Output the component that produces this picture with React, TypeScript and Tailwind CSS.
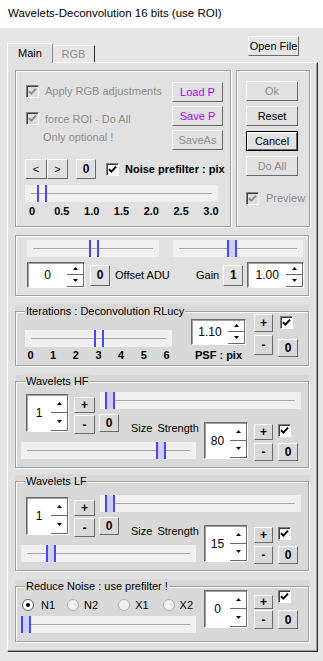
import React from 'react';

const PANEL = 'border border-[#a0a0a0] shadow-[inset_1px_1px_0_#fff,1px_1px_0_#fff]';
const GRAY = 'text-[#8d8d8d]';

interface BtnProps {
  className?: string;
  children?: React.ReactNode;
  disabled?: boolean;
  bold?: boolean;
  tone?: 'black' | 'purple';
  frame?: boolean;
}

const Btn: React.FC<BtnProps> = ({ className = '', children, disabled, bold, tone = 'black', frame }) => {
  const color = disabled ? GRAY : tone === 'purple' ? 'text-[#b300ff]' : 'text-black';
  const edge = frame
    ? 'border border-black shadow-[inset_1px_1px_0_#fff,inset_-1px_-1px_0_#6a6a6a]'
    : 'border border-t-white border-l-white border-r-[#6a6a6a] border-b-[#6a6a6a]';
  return (
    <div className={`flex shrink-0 items-center justify-center leading-none ${edge} ${color} ${bold ? 'font-bold text-[12px]' : 'text-[11px]'} ${className}`}>
      {children}
    </div>
  );
};

const Check: React.FC<{ disabled?: boolean; className?: string }> = ({ disabled, className = '' }) => (
  <div className={`flex h-[13px] w-[13px] shrink-0 items-center justify-center border border-t-[#808080] border-l-[#808080] border-r-white border-b-white shadow-[inset_1px_1px_0_#404040] ${disabled ? 'bg-[#dedede]' : 'bg-white'} ${className}`}>
    <svg width="9" height="9" viewBox="0 0 9 9">
      <path d="M1 4.2 L3.4 6.6 L8 1.6" fill="none" stroke={disabled ? '#8d8d8d' : '#000'} strokeWidth="2" />
    </svg>
  </div>
);

const Radio: React.FC<{ on?: boolean; className?: string }> = ({ on, className = '' }) => (
  <div className={`flex h-[12px] w-[12px] shrink-0 items-center justify-center rounded-full border ${on ? 'border-[#606060] bg-white' : 'border-[#b4b4b4] bg-[#f0f0f0]'} ${className}`}>
    {on && <div className="h-[4px] w-[4px] rounded-full bg-black" />}
  </div>
);

// thumb offset is a value, so it goes inline
const Slider: React.FC<{ className?: string; at: number; fill?: boolean }> = ({ className = '', at, fill }) => (
  <div className={`relative flex shrink-0 items-center bg-[#f0f0f0] px-[6px] ${className}`}>
    <div className="h-px w-full bg-[#a8a8a8]" />
    <div
      className={`absolute top-0 bottom-0 w-[10px] border-x-2 border-[#4646ff] ${fill ? 'bg-[#cfcff8]' : ''}`}
      style={{ left: at }}
    />
  </div>
);

const Arrow: React.FC<{ up?: boolean }> = ({ up }) => (
  <svg width="5" height="3" viewBox="0 0 5 3">
    <path d={up ? 'M0 3 L2.5 0 L5 3 Z' : 'M0 0 L2.5 3 L5 0 Z'} fill="#000" />
  </svg>
);

const Spin: React.FC<{ value: string; className?: string }> = ({ value, className = '' }) => (
  <div className={`flex shrink-0 border border-t-[#6a6a6a] border-l-[#6a6a6a] border-r-white border-b-white bg-white shadow-[inset_1px_1px_0_#a0a0a0] ${className}`}>
    <div className="flex flex-1 items-center justify-center text-[12px] text-black">{value}</div>
    <div className="flex w-[17px] flex-col">
      <div className="flex flex-1 items-center justify-center border-r border-b border-[#6a6a6a]">
        <Arrow up />
      </div>
      <div className="flex flex-1 items-center justify-center border-r border-b border-[#6a6a6a]">
        <Arrow />
      </div>
    </div>
  </div>
);

const Group: React.FC<{ label: string; className?: string; children: React.ReactNode }> = ({ label, className = '', children }) => (
  <div className={`w-[294px] bg-[#d9d9d9] pt-[6px] ${className}`}>
    <div className="relative border border-[#a0a0a0] shadow-[inset_1px_1px_0_#fff,1px_1px_0_#fff]">
      <span className="absolute left-[9px] top-[-8px] bg-[#d9d9d9] px-[1px] text-[11px] leading-[14px] text-black">{label}</span>
      {children}
    </div>
  </div>
);

const PlusMinus: React.FC<{ top: string; bottom: string; className?: string }> = ({ top, bottom, className = '' }) => (
  <div className={`flex flex-col ${className}`}>
    <Btn bold className={top}>+</Btn>
    <Btn bold className={bottom}>-</Btn>
  </div>
);

const Wavelets: React.FC<{ label: string; size: string; strength: string; low: number; className?: string; pad?: string }> = ({
  label,
  size,
  strength,
  low,
  className = '',
  pad = '',
}) => (
  <Group label={label} className={className}>
    <div className={`grid grid-cols-[82px_104px_1fr] grid-rows-[30px_28px_27px] ${pad}`}>
      <div className="col-start-1 row-span-2 row-start-1 flex items-start">
        <Spin value={size} className="ml-[10px] mt-[12px] h-[38px] w-[43px]" />
        <PlusMinus className="ml-[5px] mt-[15px] gap-[2px]" top="h-[16px] w-[21px]" bottom="h-[19px] w-[21px]" />
      </div>
      <Slider className="col-span-2 col-start-2 row-start-1 ml-[2px] mt-[10px] h-[17px] w-[201px]" at={5} fill />
      <div className="col-start-2 row-start-2 flex items-start">
        <Btn bold className="ml-[1px] mt-[2px] h-[18px] w-[20px]">0</Btn>
        <span className="ml-[12px] mt-[10px] leading-[13px] text-black">Size</span>
        <span className="ml-[5px] mt-[10px] leading-[13px] text-black">Strength</span>
      </div>
      <div className="col-start-3 row-span-2 row-start-2 flex items-start">
        <Spin value={strength} className="ml-[2px] mt-[10px] h-[37px] w-[44px]" />
        <PlusMinus className="ml-[6px] mt-[12px] gap-[3px]" top="h-[16px] w-[19px]" bottom="h-[18px] w-[19px]" />
        <div className="ml-[5px] mt-[12px] flex flex-col">
          <Check />
          <Btn bold className="mt-[6px] h-[18px] w-[20px]">0</Btn>
        </div>
      </div>
      <Slider className="col-span-2 col-start-1 row-start-3 ml-[5px] mt-[2px] h-[17px] w-[175px]" at={low} fill />
    </div>
  </Group>
);

export default function App() {
  return (
    <div className="h-[661px] w-[323px] overflow-hidden bg-[#e6e6e6] font-['Liberation_Sans',Arial,sans-serif] text-[11px] text-black">
      <div className="flex h-[28px] items-center bg-white pl-[8px] text-[11.5px]">Wavelets-Deconvolution 16 bits (use ROI)</div>

      <div className="flex h-[34px] pl-[7px]">
        <div className="flex items-end">
          <div className="relative z-10 -mb-px flex h-[20px] w-[46px] items-center justify-center border-t border-l border-r border-t-white border-l-white border-r-[#8a8a8a] bg-[#e1e1e1]">
            Main
          </div>
          <div className={`flex h-[17px] w-[42px] items-center justify-center border-t border-r border-t-white border-r-[#303030] ${GRAY}`}>RGB</div>
        </div>
        <Btn className="ml-auto mr-[24px] mt-[8px] h-[20px] w-[51px]">Open File</Btn>
      </div>

      <div className="ml-[7px] h-[590px] w-[311px] border border-t-white border-l-white border-r-[#303030] border-b-[#303030] bg-[#e1e1e1] pl-[7px] pt-[7px] shadow-[inset_-1px_-1px_0_#a0a0a0]">
        <div className="flex gap-[5px]">
          <div className={`flex h-[157px] w-[216px] flex-col ${PANEL}`}>
            <div className="flex h-[88px]">
              <div className="flex flex-col pl-[10px] pt-[12px]">
                <div className="flex items-center gap-[6px]">
                  <Check disabled />
                  <span className={GRAY}>Apply RGB adjustments</span>
                </div>
                <div className="mt-[11px] flex items-center gap-[6px]">
                  <Check disabled />
                  <span className={GRAY}>force ROI - Do All</span>
                </div>
                <span className={`mt-[4px] pl-[17px] leading-[13px] ${GRAY}`}>Only optional !</span>
              </div>
              <div className="ml-auto mr-[7px] flex flex-col gap-[4px] pt-[11px]">
                <Btn tone="purple" className="h-[20px] w-[51px]">Load P</Btn>
                <Btn tone="purple" className="h-[20px] w-[51px]">Save P</Btn>
                <Btn disabled className="h-[20px] w-[51px]">SaveAs</Btn>
              </div>
            </div>
            <div className="flex h-[20px] items-center pl-[9px]">
              <Btn className="h-[20px] w-[22px]">&lt;</Btn>
              <Btn className="h-[20px] w-[21px]">&gt;</Btn>
              <Btn bold className="ml-[8px] h-[20px] w-[20px]">0</Btn>
              <Check className="ml-[10px]" />
              <span className="ml-[6px] font-bold">Noise prefilter : pix</span>
            </div>
            <Slider className="ml-[9px] mt-[6px] h-[17px] w-[193px]" at={12} />
            <div className="ml-[9px] mt-[3px] flex w-[193px] justify-between font-bold leading-[13px]">
              {['0', '0.5', '1.0', '1.5', '2.0', '2.5', '3.0'].map((t) => (
                <span key={t} className="flex w-[14px] justify-center">{t}</span>
              ))}
            </div>
          </div>

          <div className={`flex h-[157px] w-[74px] flex-col gap-[5px] pl-[9px] pt-[10px] ${PANEL}`}>
            <Btn disabled className="h-[20px] w-[52px]">Ok</Btn>
            <Btn className="h-[20px] w-[52px]">Reset</Btn>
            <Btn frame className="h-[20px] w-[52px]">Cancel</Btn>
            <Btn disabled className="h-[20px] w-[52px]">Do All</Btn>
            <div className="mt-[9px] flex items-center gap-[7px]">
              <Check disabled />
              <span className={GRAY}>Preview</span>
            </div>
          </div>
        </div>

        <div className={`mt-[8px] flex h-[61px] w-[294px] flex-col pl-[11px] pt-[4px] ${PANEL}`}>
          <div className="flex">
            <Slider className="h-[17px] w-[132px]" at={62} />
            <Slider className="ml-[14px] h-[17px] w-[130px]" at={54} fill />
          </div>
          <div className="mt-[5px] flex items-center">
            <Spin value="0" className="h-[26px] w-[58px]" />
            <Btn bold className="ml-[5px] h-[21px] w-[20px]">0</Btn>
            <span className="ml-[5px] w-[81px]">Offset ADU</span>
            <span>Gain</span>
            <Btn bold className="ml-[4px] h-[21px] w-[20px]">1</Btn>
            <Spin value="1.00" className="ml-[4px] h-[26px] w-[57px]" />
          </div>
        </div>

        <Group label="Iterations : Deconvolution RLucy" className="mt-[9px]">
          <div className="flex h-[53px] items-start">
            <div className="ml-[9px] mt-[18px] flex flex-col">
              <Slider className="h-[17px] w-[147px]" at={69} />
              <div className="mt-[2px] flex w-[147px] justify-between font-bold leading-[13px]">
                {['0', '1', '2', '3', '4', '5', '6'].map((t) => (
                  <span key={t} className="flex w-[11px] justify-center">{t}</span>
                ))}
              </div>
            </div>
            <div className="ml-[19px] mt-[7px] flex flex-col items-center">
              <Spin value="1.10" className="h-[26px] w-[55px]" />
              <span className="mt-[4px] font-bold leading-[13px]">PSF : pix</span>
            </div>
            <PlusMinus className="ml-[8px] mt-[2px] gap-[3px]" top="h-[18px] w-[19px]" bottom="h-[20px] w-[19px]" />
            <div className="ml-[5px] mt-[4px] flex flex-col">
              <Check className="ml-[2px]" />
              <Btn bold className="mt-[10px] h-[18px] w-[20px]">0</Btn>
            </div>
          </div>
        </Group>

        <Wavelets label="Wavelets HF" size="1" strength="80" low={135} className="mt-[9px]" />
        <Wavelets label="Wavelets LF" size="1" strength="15" low={25} className="mt-[7px]" pad="pt-[3px]" />

        <Group label="Reduce Noise : use prefilter !" className="mt-[9px]">
          <div className="flex h-[54px] items-start">
            <div className="ml-[5px] flex flex-col">
              <div className="mt-[12px] flex h-[12px] items-center">
                <Radio on className="ml-[1px]" />
                <span className="ml-[7px]">N1</span>
                <Radio className="ml-[12px]" />
                <span className="ml-[5px]">N2</span>
                <Radio className="ml-[20px]" />
                <span className="ml-[5px]">X1</span>
                <Radio className="ml-[14px]" />
                <span className="ml-[5px]">X2</span>
              </div>
              <Slider className="mt-[5px] h-[17px] w-[175px]" at={0} fill />
            </div>
            <Spin value="0" className="ml-[8px] mt-[3px] h-[38px] w-[44px]" />
            <PlusMinus className="ml-[6px] mt-[8px] gap-[1px]" top="h-[14px] w-[19px]" bottom="h-[19px] w-[19px]" />
            <div className="ml-[5px] mt-[3px] flex flex-col">
              <Check />
              <Btn bold className="mt-[7px] h-[19px] w-[20px]">0</Btn>
            </div>
          </div>
        </Group>
      </div>
    </div>
  );
}
